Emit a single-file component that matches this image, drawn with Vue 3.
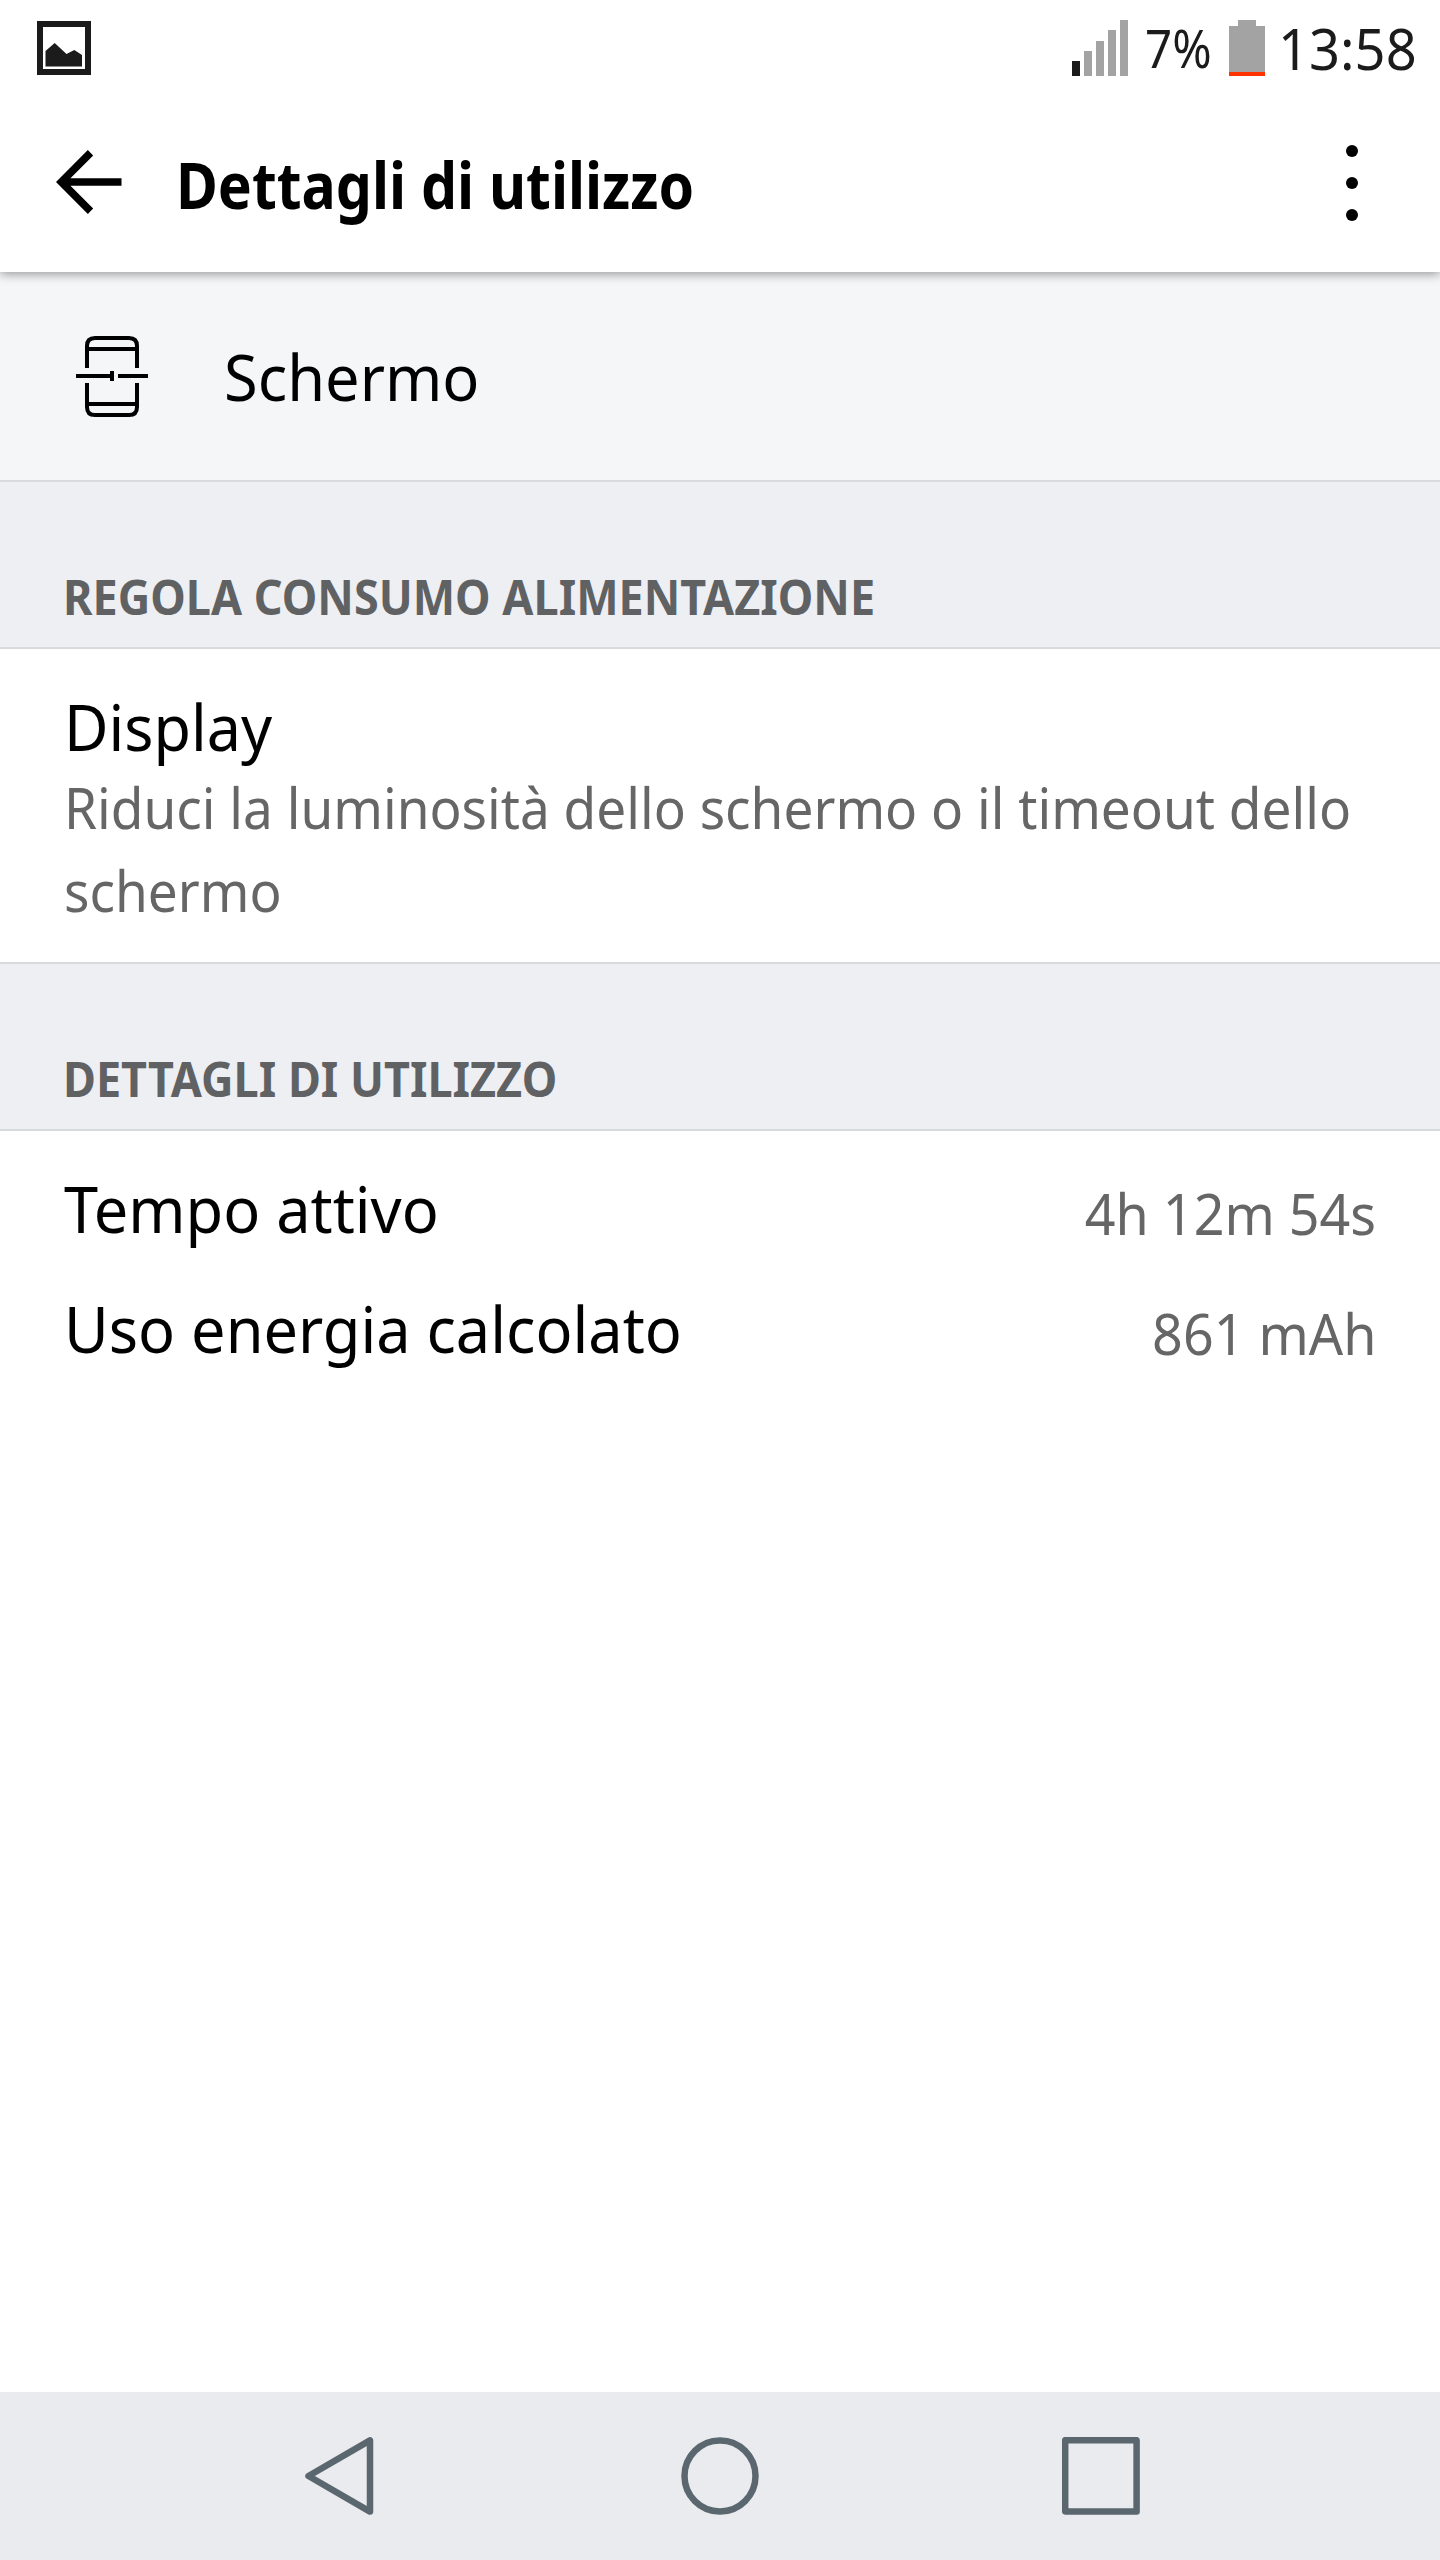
<template>
  <div class="screen">
    <div class="status-bar">
      <svg class="picture-icon" viewBox="0 0 54 54">
        <path d="M0 0H54V54H0ZM6 6V48H48V6Z" fill="#1b1b1b" fill-rule="evenodd" />
        <path d="M8.5 30L17.7 22L29.5 33L37.3 29L45 34V45.5H8.5Z" fill="#1b1b1b" />
      </svg>
      <svg class="signal-icon" viewBox="0 0 56 56">
        <rect
          v-for="(h, index) in signalBars"
          :key="index"
          :x="index * 12"
          :y="56 - h"
          width="8"
          :height="h"
          :fill="index < signalLevel ? '#1b1b1b' : '#a3a3a3'"
        />
      </svg>
      <div class="percent"><span>{{ battery }}%</span></div>
      <svg class="battery-icon" viewBox="0 0 36 56">
        <path d="M9 0H27V6H36V52H0V6H9Z" fill="#a3a3a3" />
        <rect y="52" width="36" height="4" fill="#ff3300" />
      </svg>
      <div class="clock"><span>13:58</span></div>
    </div>

    <header class="app-bar">
      <button class="back-btn">
        <svg viewBox="0 0 66 64">
          <path d="M65.5 32H6M34.5 2.8L5.3 32L34.5 61.2" fill="none" stroke="#000" stroke-width="7.6" />
        </svg>
      </button>
      <h1><span>Dettagli di utilizzo</span></h1>
      <button class="menu-btn">
        <svg viewBox="0 0 12 76">
          <circle v-for="y in [6, 38, 70]" :key="y" cx="6" :cy="y" r="6" />
        </svg>
      </button>
    </header>

    <div class="entry">
      <svg class="entry-icon" viewBox="0 0 72 81" fill="none" stroke="#000" stroke-width="4">
        <path d="M11 32V10Q11 2 19 2H53Q61 2 61 10V32M11 13H61" />
        <path d="M11 47V71Q11 79 19 79H53Q61 79 61 71V47M11 68H61" />
        <path d="M0 40H36M42 40H72M36 35V45" />
      </svg>
      <span class="entry-name">Schermo</span>
    </div>

    <h2><span>REGOLA CONSUMO ALIMENTAZIONE</span></h2>
    <div class="action">
      <div class="action-title">Display</div>
      <p>Riduci la luminosità dello schermo o il timeout dello schermo</p>
    </div>

    <h2><span>DETTAGLI DI UTILIZZO</span></h2>
    <div class="details">
      <div v-for="item in details" :key="item.label" class="detail-row">
        <span class="label">{{ item.label }}</span>
        <span class="value">{{ item.value }}</span>
      </div>
    </div>

    <nav class="nav-bar">
      <svg viewBox="0 0 78 78">
        <path d="M8.5 39L70 3.4V74.6Z" />
      </svg>
      <svg viewBox="0 0 78 78">
        <circle cx="39" cy="39" r="35.5" />
      </svg>
      <svg viewBox="0 0 78 78">
        <rect x="3.2" y="3.2" width="71.4" height="71.4" />
      </svg>
    </nav>
  </div>
</template>

<script setup>
import { ref } from 'vue'

const battery = ref(7)
const signalLevel = ref(1)
const signalBars = [15, 25, 35, 46, 56]

const details = [
  { label: 'Tempo attivo', value: '4h 12m 54s' },
  { label: 'Uso energia calcolato', value: '861 mAh' }
]
</script>

<style>
body {
  margin: 0;
  background: #fff;
}
</style>

<style scoped>
.screen {
  display: flex;
  flex-direction: column;
  width: 1440px;
  height: 2560px;
  background: #fff;
  color: #000;
  font-family: 'Noto Sans', sans-serif;
  white-space: nowrap;
  overflow: hidden;
}

.screen svg {
  display: block;
  flex: none;
}

button {
  padding: 0;
  border: none;
  background: none;
  cursor: pointer;
}

/* Status bar */
.status-bar {
  position: relative;
  z-index: 2;
  display: flex;
  align-items: center;
  box-sizing: border-box;
  height: 96px;
  padding: 0 26px 0 37px;
  background: #fff;
  color: #1b1b1b;
}

.picture-icon {
  width: 54px;
  height: 54px;
}

.signal-icon {
  width: 56px;
  height: 56px;
  margin-left: auto;
  margin-right: 17px;
}

.percent {
  width: 84px;
  font-size: 52px;
  line-height: 60px;
}

.percent span {
  display: inline-block;
  transform: scaleX(0.913);
  transform-origin: left;
}

.battery-icon {
  width: 36px;
  height: 56px;
  margin-right: 13px;
}

.clock {
  width: 136px;
  font-size: 56px;
  line-height: 60px;
}

.clock span {
  display: inline-block;
  transform: scaleX(0.969);
  transform-origin: left;
}

/* App bar */
.app-bar {
  position: relative;
  z-index: 1;
  display: flex;
  align-items: center;
  box-sizing: border-box;
  height: 176px;
  padding: 0 82px 0 56px;
  background: #fff;
  box-shadow: 0 2px 10px rgba(0, 0, 0, 0.4);
}

.back-btn {
  margin-right: 54px;
  padding-bottom: 4px;
}

.back-btn svg {
  width: 66px;
  height: 64px;
}

h1 {
  flex: 1;
  margin: 0;
  padding-top: 2px;
  font-size: 64px;
  font-weight: 700;
  line-height: 88px;
}

h1 span {
  display: inline-block;
  transform: scaleX(0.893);
  transform-origin: left;
}

.menu-btn {
  padding-bottom: 2px;
}

.menu-btn svg {
  width: 12px;
  height: 76px;
}

/* Selected entry */
.entry {
  display: flex;
  align-items: center;
  height: 208px;
  padding-left: 76px;
  background: #f5f6f8;
  border-bottom: 2px solid #d9dadc;
}

.entry-icon {
  width: 72px;
  height: 81px;
}

.entry-name {
  margin-left: 76px;
  padding-top: 2px;
  font-size: 64px;
  line-height: 88px;
  transform: scaleX(0.9586);
  transform-origin: left;
}

/* Section headings */
h2 {
  display: flex;
  align-items: flex-end;
  box-sizing: border-box;
  height: 167px;
  margin: 0;
  padding: 0 0 18px 63px;
  background: #eeeff3;
  border-bottom: 2px solid #d9dadc;
  color: #606163;
  font-size: 48px;
  font-weight: 700;
  line-height: 64px;
}

h2 span {
  transform: scaleX(0.937);
  transform-origin: left;
}

.action {
  box-sizing: border-box;
  height: 315px;
  padding: 38px 0 0 64px;
  border-bottom: 2px solid #d9dadc;
}

.action-title {
  font-size: 64px;
  line-height: 80px;
  transform: scaleX(0.953);
  transform-origin: left;
}

.action p {
  width: 1376px;
  margin: -1px 0 0;
  color: #666;
  font-size: 56px;
  line-height: 83px;
  white-space: normal;
  transform: scaleX(0.949);
  transform-origin: left;
}

.details {
  flex: 1;
  padding: 17px 64px 0;
}

.detail-row {
  display: flex;
  align-items: center;
  justify-content: space-between;
  height: 120px;
}

.label {
  font-size: 64px;
  transform: scaleX(0.957);
  transform-origin: left;
}

.value {
  padding-top: 10px;
  color: #666;
  font-size: 56px;
  transform: scaleX(0.961);
  transform-origin: right;
}

/* Navigation bar */
.nav-bar {
  display: flex;
  align-items: center;
  justify-content: center;
  gap: 303px;
  height: 168px;
  background: #e9ebef;
}

.nav-bar svg {
  width: 78px;
  height: 78px;
  fill: none;
  stroke: #5b676f;
  stroke-width: 6.5;
  stroke-linejoin: round;
}
</style>
